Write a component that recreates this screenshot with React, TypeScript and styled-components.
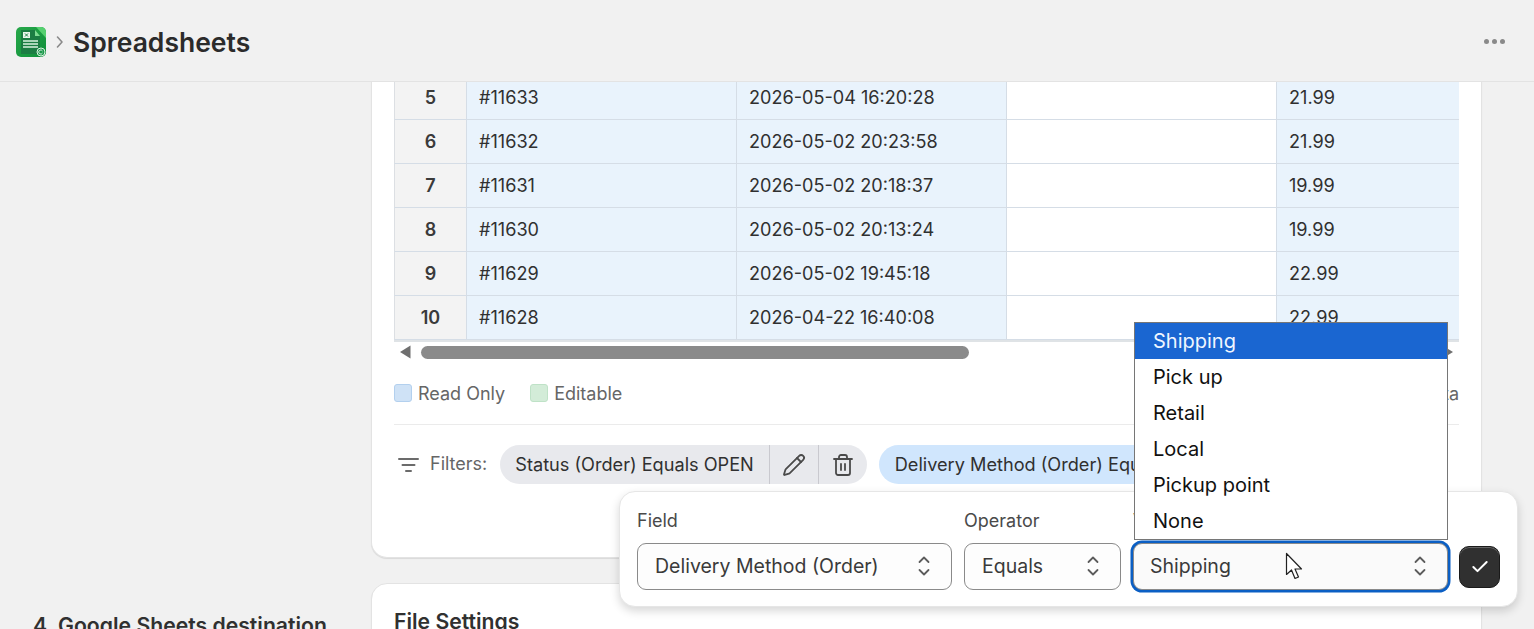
import React from "react";
import styled, { createGlobalStyle } from "styled-components";
import { Pencil, Trash2, Check } from "lucide-react";

const Global = createGlobalStyle`
  html, body { margin: 0; padding: 0; height: 629px; overflow: hidden; background: #f1f1f1; }
  body { font-family: Inter, "Liberation Sans", sans-serif; font-size: 18px; color: #303030; }
  * { box-sizing: border-box; }
`;

const Page = styled.div`
  position: relative;
  width: 1534px;
  height: 629px;
  overflow: hidden;
  display: flex;
  flex-direction: column;
`;

const Header = styled.header`
  flex: 0 0 82px;
  display: flex;
  align-items: center;
  padding: 2px 29px 0 16px;
  border-bottom: 1px solid #e3e3e3;
  background: #f1f1f1;
  position: relative;
  z-index: 2;
`;

const Crumb = styled.span`
  display: flex;
  margin: 0 9px 0 10px;
  color: #8a8a8a;
`;

const Title = styled.h1`
  margin: 0;
  flex: 1;
  font-size: 26.5px;
  line-height: 36px;
  font-weight: 600;
  color: #2b2b2b;
`;

const Dots = styled.div`
  display: flex;
  gap: 3px;
`;

const Dot = styled.span`
  width: 5px;
  height: 5px;
  border-radius: 50%;
  background: #8a8a8a;
`;

const Main = styled.main`
  flex: 1;
  min-height: 0;
  overflow: hidden;
  display: grid;
  grid-template-columns: 371px 1111px;
  grid-auto-rows: min-content;
  row-gap: 25px;
  margin-top: -6px;
`;

const SideHeading = styled.h2`
  margin: 0;
  padding: 29px 0 0 33px;
  font-size: 21.2px;
  line-height: 26px;
  font-weight: 600;
  color: #303030;
  white-space: nowrap;
`;

const Card = styled.section`
  background: #fff;
  border: 1px solid #e3e3e3;
  border-radius: 16px;
  box-shadow: 0 1px 1px rgba(0, 0, 0, 0.1);
  padding: 0 22px;
  min-width: 0;
`;

const TopCard = styled(Card)`
  grid-column: 2;
  height: 482px;
  border-top: 0;
  border-radius: 0 0 16px 16px;
`;

const TableClip = styled.div`
  width: 1065px;
  overflow: hidden;
  border-bottom: 2px solid #dfe3e6;
  position: relative;
  font-size: 18.1px;
`;

const Row = styled.div`
  display: grid;
  grid-template-columns: 73px 270px 270px 270px 270px;
  height: 44px;
`;

const NumCell = styled.div`
  display: flex;
  align-items: center;
  justify-content: center;
  padding-bottom: 1px;
  background: #f3f3f3;
  border-left: 1px solid #dcdfe3;
  border-right: 1px solid #d5dde6;
  border-bottom: 1px solid #d5dde6;
  font-size: 18px;
  font-weight: 600;
  color: #3a3a3a;
`;

const Cell = styled.div<{ $blank?: boolean }>`
  display: flex;
  align-items: center;
  padding: 0 0 1px 12px;
  background: ${(p) => (p.$blank ? "#fff" : "#e9f3fc")};
  border-right: 1px solid #d5dde6;
  border-bottom: 1px solid #d5dde6;
  color: #303030;
`;

const ScrollBar = styled.div`
  display: flex;
  align-items: center;
  height: 20px;
  padding: 0 5px;
  gap: 10px;
`;

const Thumb = styled.div`
  width: 548px;
  height: 13px;
  border-radius: 7px;
  background: #8a8a8a;
`;

const Spacer = styled.div`
  flex: 1;
`;

const Legend = styled.div`
  display: flex;
  align-items: center;
  height: 63px;
  border-bottom: 1px solid #ebebeb;
  color: #666;
`;

const LegendItem = styled.div`
  display: flex;
  align-items: center;
  gap: 6px;
  margin-right: 25px;
`;

const Swatch = styled.span<{ $bg: string; $bd: string }>`
  width: 18px;
  height: 18px;
  border-radius: 3px;
  background: ${(p) => p.$bg};
  border: 1px solid ${(p) => p.$bd};
`;

const FilterRow = styled.div`
  display: flex;
  align-items: center;
  margin-top: 20px;
  height: 39px;
  overflow: hidden;
  padding-left: 4px;
  color: #666;
`;

const FilterLabel = styled.span`
  margin: 0 13px 2px 10px;
`;

const Chip = styled.div<{ $bg: string }>`
  display: flex;
  align-items: stretch;
  height: 39px;
  flex: none;
  border-radius: 20px;
  background: ${(p) => p.$bg};
  color: #303030;
  margin-right: 12px;
  overflow: hidden;
  font-size: 18.15px;
`;

const ChipText = styled.span<{ $lead: number }>`
  display: flex;
  align-items: center;
  padding: 0 15px 2px ${(p) => p.$lead}px;
  white-space: nowrap;
`;

const ChipAction = styled.span`
  width: 49px;
  display: flex;
  align-items: center;
  justify-content: center;
  border-left: 1px solid #c9c9cf;
  color: #4a4a4a;
`;

const BottomCard = styled(Card)`
  grid-column: 2;
  height: 200px;
  padding-top: 24px;
`;

const CardTitle = styled.h3`
  margin: 0;
  font-size: 21.2px;
  line-height: 26px;
  font-weight: 600;
  color: #303030;
`;

const Popover = styled.div`
  position: absolute;
  left: 619px;
  top: 491px;
  width: 899px;
  height: 116px;
  padding: 17px 17px 0;
  display: flex;
  align-items: flex-start;
  gap: 12px;
  background: #fff;
  border: 1px solid #e6e6e6;
  border-radius: 16px;
  box-shadow: 0 4px 10px rgba(0, 0, 0, 0.16);
  z-index: 3;
`;

const Field = styled.div<{ $w: number }>`
  width: ${(p) => p.$w}px;
  flex: none;
`;

const FieldLabel = styled.div`
  height: 24px;
  line-height: 24px;
  font-size: 18px;
  color: #4a4a4a;
  margin-bottom: 10px;
`;

const SelectBox = styled.div<{ $focus?: boolean }>`
  height: 47px;
  display: flex;
  align-items: center;
  justify-content: space-between;
  padding: 0 20px 1px ${(p) => (p.$focus ? 16 : 17)}px;
  border: 1px solid #8a8a8a;
  border-radius: 9px;
  background: ${(p) => (p.$focus ? "#fafafa" : "#fdfdfd")};
  color: #3a3a3a;
  font-size: 19.5px;
  white-space: nowrap;
  box-shadow: ${(p) => (p.$focus ? "0 0 0 2.5px #0b5fc4" : "none")};
`;

const ConfirmButton = styled.button`
  width: 43px;
  height: 42px;
  margin: 37px 0 0 -1px;
  border: 1px solid #1a1a1a;
  border-radius: 10px;
  background: #303030;
  color: #fff;
  display: flex;
  align-items: center;
  justify-content: center;
  padding: 0;
  box-shadow: inset 0 1px 0 rgba(255, 255, 255, 0.25);
`;

const Dropdown = styled.ul`
  position: absolute;
  left: 1134px;
  top: 322px;
  width: 314px;
  margin: 0;
  padding: 0;
  list-style: none;
  background: #fff;
  border: 1px solid #767676;
  font-size: 20px;
  color: #111;
  z-index: 4;
`;

const Option = styled.li<{ $active?: boolean }>`
  height: 36px;
  display: flex;
  align-items: center;
  padding-left: 18px;
  background: ${(p) => (p.$active ? "#1a66d1" : "transparent")};
  color: ${(p) => (p.$active ? "#f0f6ff" : "#111")};
`;

const CursorMark = styled.svg`
  position: absolute;
  left: 1285px;
  top: 552px;
  z-index: 5;
`;

const ChevronSvg = styled.svg`
  flex: none;
  color: #5c5c5c;
`;

const UpDown = () => (
  <ChevronSvg width="14" height="24" viewBox="0 0 14 24" fill="none" stroke="currentColor" strokeWidth="1.8" strokeLinecap="round" strokeLinejoin="round">
    <path d="M2.5 8 7 3.5 11.5 8" />
    <path d="M2.5 16 7 20.5 11.5 16" />
  </ChevronSvg>
);

const SheetLogo = () => (
  <svg width="30" height="30" viewBox="0 0 30 30">
    <defs>
      <linearGradient id="lg" x1="0" y1="0" x2="1" y2="1">
        <stop offset="0" stopColor="#27a84a" />
        <stop offset="1" stopColor="#0f8f3a" />
      </linearGradient>
    </defs>
    <rect width="30" height="30" rx="5" fill="url(#lg)" />
    <path d="M20 0h5a5 5 0 0 1 5 5v6z" fill="#55d06f" />
    <path d="M5 3h14l5 6v18H5z" fill="#1c7d43" />
    <path d="M19 3l5 6h-5z" fill="#7fdc92" />
    <rect x="7" y="5" width="7" height="6" fill="#eaf6ec" />
    <path d="M9 6.5l3 3M12 6.5l-3 3" stroke="#1c7d43" strokeWidth="1" />
    <path d="M7 14h15M7 17h15M7 20h15" stroke="#d9f2df" strokeWidth="1.3" />
    <circle cx="25" cy="25" r="4" fill="#1c9a4c" stroke="#d9f2df" strokeWidth="1" />
    <path d="M26.5 24a2 2 0 1 0 0 2" fill="none" stroke="#fff" strokeWidth=".8" />
  </svg>
);

const rows: [number, string, string, string][] = [
  [5, "#11633", "2026-05-04 16:20:28", "21.99"],
  [6, "#11632", "2026-05-02 20:23:58", "21.99"],
  [7, "#11631", "2026-05-02 20:18:37", "19.99"],
  [8, "#11630", "2026-05-02 20:13:24", "19.99"],
  [9, "#11629", "2026-05-02 19:45:18", "22.99"],
  [10, "#11628", "2026-04-22 16:40:08", "22.99"],
];

const options = ["Shipping", "Pick up", "Retail", "Local", "Pickup point", "None"];

export default function App() {
  return (
    <Page>
      <Global />
      <Header>
        <SheetLogo />
        <Crumb>
          <svg width="8" height="14" viewBox="0 0 8 14" fill="none" stroke="currentColor" strokeWidth="1.6" strokeLinecap="round" strokeLinejoin="round">
            <path d="M1.5 2 6 7l-4.5 5" />
          </svg>
        </Crumb>
        <Title>Spreadsheets</Title>
        <Dots>
          <Dot />
          <Dot />
          <Dot />
        </Dots>
      </Header>
      <Main>
        <TopCard>
          <TableClip>
            {rows.map(([n, id, date, price]) => (
              <Row key={n}>
                <NumCell>{n}</NumCell>
                <Cell>{id}</Cell>
                <Cell>{date}</Cell>
                <Cell $blank />
                <Cell>{price}</Cell>
              </Row>
            ))}
          </TableClip>
          <ScrollBar>
            <svg width="12" height="14" viewBox="0 0 12 14">
              <path d="M11.5 0.5v13L1 7z" fill="#6f6f6f" />
            </svg>
            <Thumb />
            <Spacer />
            <svg width="12" height="14" viewBox="0 0 12 14">
              <path d="M.5 0.5v13L11 7z" fill="#6f6f6f" />
            </svg>
          </ScrollBar>
          <Legend>
            <LegendItem>
              <Swatch $bg="#cfe2f6" $bd="#b3d0ee" />
              Read Only
            </LegendItem>
            <LegendItem>
              <Swatch $bg="#d3ecd8" $bd="#bfe2c7" />
              Editable
            </LegendItem>
            <Spacer />
            <span>Preview data</span>
          </Legend>
          <FilterRow>
            <svg width="22" height="18" viewBox="0 0 22 18" fill="none" stroke="#6b6b6b" strokeWidth="2" strokeLinecap="round">
              <path d="M1 3h19M4.5 9h12M8 15h5" />
            </svg>
            <FilterLabel>Filters:</FilterLabel>
            <Chip $bg="#e8e9ed">
              <ChipText $lead={15}>Status (Order) Equals OPEN</ChipText>
              <ChipAction>
                <Pencil size={24} strokeWidth={1.8} />
              </ChipAction>
              <ChipAction>
                <Trash2 size={24} strokeWidth={1.8} />
              </ChipAction>
            </Chip>
            <Chip $bg="#d0e6fd">
              <ChipText $lead={16}>Delivery Method (Order) Equals Shipping</ChipText>
            </Chip>
          </FilterRow>
        </TopCard>
        <SideHeading>4. Google Sheets destination</SideHeading>
        <BottomCard>
          <CardTitle>File Settings</CardTitle>
        </BottomCard>
      </Main>
      <Popover>
        <Field $w={315}>
          <FieldLabel>Field</FieldLabel>
          <SelectBox>
            Delivery Method (Order)
            <UpDown />
          </SelectBox>
        </Field>
        <Field $w={157}>
          <FieldLabel>Operator</FieldLabel>
          <SelectBox>
            Equals
            <UpDown />
          </SelectBox>
        </Field>
        <Field $w={315}>
          <FieldLabel>Value</FieldLabel>
          <SelectBox $focus>
            Shipping
            <UpDown />
          </SelectBox>
        </Field>
        <ConfirmButton aria-label="Apply">
          <Check size={20} strokeWidth={2.4} />
        </ConfirmButton>
      </Popover>
      <Dropdown>
        {options.map((o, i) => (
          <Option key={o} $active={i === 0}>
            {o}
          </Option>
        ))}
      </Dropdown>
      <CursorMark width="20" height="30" viewBox="0 0 20 30">
        <path d="M1.5 1.5v21l5-4.5 3.5 8.5 3.5-1.5-3.5-8h6.5z" fill="#fff" stroke="#222" strokeWidth="1.2" strokeLinejoin="round" />
      </CursorMark>
    </Page>
  );
}
